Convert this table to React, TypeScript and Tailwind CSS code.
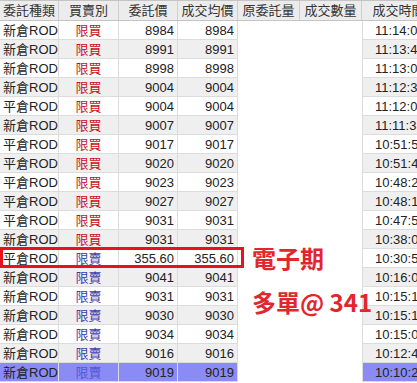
import React from 'react'

type Row = {
  kind: string
  side: 'buy' | 'sell'
  price: string
  avg: string
  time: string
}

const rows: Row[] = [
  { kind: '新倉ROD', side: 'buy', price: '8984', avg: '8984', time: '11:14:05' },
  { kind: '新倉ROD', side: 'buy', price: '8991', avg: '8991', time: '11:13:42' },
  { kind: '新倉ROD', side: 'buy', price: '8998', avg: '8998', time: '11:13:08' },
  { kind: '新倉ROD', side: 'buy', price: '9004', avg: '9004', time: '11:12:36' },
  { kind: '平倉ROD', side: 'buy', price: '9004', avg: '9004', time: '11:12:03' },
  { kind: '新倉ROD', side: 'buy', price: '9007', avg: '9007', time: '11:11:31' },
  { kind: '平倉ROD', side: 'buy', price: '9017', avg: '9017', time: '10:51:55' },
  { kind: '平倉ROD', side: 'buy', price: '9020', avg: '9020', time: '10:51:48' },
  { kind: '平倉ROD', side: 'buy', price: '9023', avg: '9023', time: '10:48:22' },
  { kind: '平倉ROD', side: 'buy', price: '9027', avg: '9027', time: '10:48:10' },
  { kind: '平倉ROD', side: 'buy', price: '9031', avg: '9031', time: '10:47:52' },
  { kind: '新倉ROD', side: 'buy', price: '9031', avg: '9031', time: '10:38:04' },
  { kind: '平倉ROD', side: 'sell', price: '355.60', avg: '355.60', time: '10:30:54' },
  { kind: '新倉ROD', side: 'sell', price: '9041', avg: '9041', time: '10:16:03' },
  { kind: '新倉ROD', side: 'sell', price: '9031', avg: '9031', time: '10:15:12' },
  { kind: '新倉ROD', side: 'sell', price: '9030', avg: '9030', time: '10:15:10' },
  { kind: '新倉ROD', side: 'sell', price: '9034', avg: '9034', time: '10:15:05' },
  { kind: '新倉ROD', side: 'sell', price: '9016', avg: '9016', time: '10:12:45' },
  { kind: '新倉ROD', side: 'sell', price: '9019', avg: '9019', time: '10:10:21' },
]

const headers = [
  { label: '委託種類', w: 'w-[59px]' },
  { label: '買賣別', w: 'w-[60px]' },
  { label: '委託價', w: 'w-[59px]' },
  { label: '成交均價', w: 'w-[60px]' },
  { label: '原委託量', w: 'w-[62px]' },
  { label: '成交數量', w: 'w-[62px]' },
  { label: '成交時間', w: 'w-[74px]' },
]

export default function App() {
  return (
    <div className="relative h-[383px] w-[417px] overflow-hidden bg-white text-[13px] text-[#222] font-['Liberation_Sans','Noto_Sans_CJK_TC',sans-serif]">
      {/* Header */}
      <div className="flex h-[21px] w-max border-t border-b border-[#c4c4c4] bg-[#ececec] text-[#333]">
        {headers.map((h) => (
          <div
            key={h.label}
            className={`${h.w} flex shrink-0 items-center justify-center border-r border-[#cfcfcf] leading-none`}
          >
            {h.label}
          </div>
        ))}
      </div>

      {/* Rows */}
      {rows.map((r, i) => {
        const last = i === rows.length - 1
        const bg = last ? 'bg-[#8b8bf5]' : i % 2 === 1 ? 'bg-[#efefef]' : 'bg-white'
        const sideColor = r.side === 'buy' ? 'text-[#c8101a]' : last ? 'text-[#5656d8]' : 'text-[#3c3cac]'
        return (
          <div key={i} className="flex h-[19px] w-max leading-none">
            <div className={`${bg} flex w-[59px] shrink-0 items-center border-r border-b border-[#dcdcdc] pl-[3px]`}>
              {r.kind}
            </div>
            <div className={`${bg} ${sideColor} flex w-[60px] shrink-0 items-center justify-center border-r border-b border-[#dcdcdc]`}>
              {r.side === 'buy' ? '限買' : '限賣'}
            </div>
            <div className={`${bg} flex w-[59px] shrink-0 items-center justify-end border-r border-b border-[#dcdcdc] pr-[3px]`}>
              {r.price}
            </div>
            <div className={`${bg} flex w-[60px] shrink-0 items-center justify-end border-r border-b border-[#dcdcdc] pr-[3px]`}>
              {r.avg}
            </div>
            <div className="w-[124px] shrink-0 bg-white" />
            <div className={`${bg} flex w-[74px] shrink-0 items-center border-b border-l border-[#dcdcdc] pl-[12px]`}>
              {r.time}
            </div>
          </div>
        )
      })}

      {/* Highlight box */}
      <div className="absolute left-0 top-[247px] h-[21px] w-[244px] border-[3px] border-[#e8121c]" />

      {/* Annotation */}
      <div className="absolute left-[252px] top-[246px] text-[24px] font-bold leading-none text-[#e2262e] font-['Noto_Sans_CJK_TC',sans-serif]">
        電子期
      </div>
      <div className="absolute left-[252px] top-[290px] text-[24px] font-bold leading-none text-[#e2262e] font-['Noto_Sans_CJK_TC',sans-serif]">
        多單@ 341
      </div>
    </div>
  )
}
